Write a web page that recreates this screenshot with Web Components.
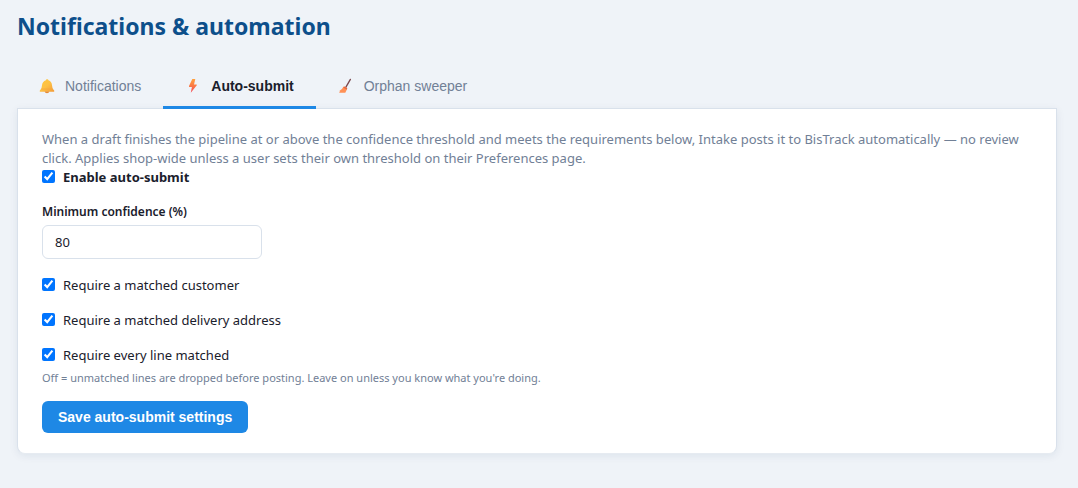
<!DOCTYPE html>
<html lang="en">
<head>
<meta charset="utf-8">
<title>Notifications &amp; automation</title>
<style>
  :root {
    --page: #eff3f8; --ink: #1a202c; --muted: #718096; --line: #d9e1eb;
    --brand: #0d4f8b; --accent: #1e88e5;
    --text-font: "Noto Sans", "Open Sans", sans-serif;
    --ui-font: "Liberation Sans", Arial, sans-serif;
  }
  body { margin: 0; background: var(--page); color: var(--ink); font: 13px/19px var(--text-font); }
</style>
</head>
<body>
<settings-page></settings-page>

<template id="settings-page">
  <style>
    :host { display: block; padding: 8px 21px 32px 17px; }
    h1 { margin: 0 0 28px; font-size: 23px; line-height: 36px; font-weight: 700; color: var(--brand); }
    nav { display: flex; }
    p { margin: 0; color: var(--muted); }
    small { display: block; font-size: 11px; line-height: 16px; color: var(--muted); }
    .checks { display: grid; gap: 16px; margin: 17px 0 5px; }
  </style>
  <h1>Notifications &amp; automation</h1>
  <nav role="tablist" aria-label="Settings sections">
    <settings-tab>
      <svg slot="icon" width="20" height="20" viewBox="0 0 20 20">
        <defs><linearGradient id="bell" x1="0" x2="1" y1="0" y2="1"><stop offset="0" stop-color="#ffc83d"/><stop offset=".5" stop-color="#fdc044"/><stop offset="1" stop-color="#f29a38"/></linearGradient></defs>
        <path d="M8.900 4.200C8.900 2.800 11.400 2.800 11.400 4.200 13.900 5 14.800 6.800 15 9.300l.6 3.300 1.600 1.900v1.300H2.800v-1.300L4.400 12.600 5 9.300C5.300 6.800 6.400 5 8.900 4.200Z" fill="url(#bell)"/>
        <path d="M7.800 15.500h4.400c0 2.200-4.400 2.200-4.400 0Z" fill="#e58a35"/><path d="M4.300 13 15.800 13" stroke="#f6a63d" stroke-width=".8"/>
      </svg>Notifications
    </settings-tab>
    <settings-tab selected>
      <svg slot="icon" width="20" height="20" viewBox="0 0 20 20">
        <defs><linearGradient id="bolt" x1="0" x2="0" y1="0" y2="1"><stop offset="0" stop-color="#ffa13d"/><stop offset=".5" stop-color="#fa7845"/><stop offset="1" stop-color="#f4475a"/></linearGradient></defs>
        <path d="M9.300 3 6 10q-.3.900.5.900H8.900L7.800 16.800 13.800 9.300q.4-.9-.5-.9H11L12.300 3Z" fill="url(#bolt)"/>
      </svg>Auto-submit
    </settings-tab>
    <settings-tab>
      <svg slot="icon" width="20" height="20" viewBox="0 0 20 20">
        <path d="M14.300 3.500 9.700 11.500" stroke="#7b4a50" stroke-width="1.500" stroke-linecap="round"/>
        <path d="M7.600 10.400q3 .2 3.500 2.700L9.300 16.700H3l1.200-1.400H3q3-1.500 4.600-4.900Z" fill="#ff9156"/>
        <path d="m8.200 10.400 3.100 1.900-.5 1.200L7.400 11.700Z" fill="#e9663f"/>
      </svg>Orphan sweeper
    </settings-tab>
  </nav>
  <settings-card>
    <p>When a draft finishes the pipeline at or above the confidence threshold and meets the requirements below, Intake posts it to BisTrack automatically — no review click. Applies shop-wide unless a user sets their own threshold on their Preferences page.</p>
    <check-option strong>Enable auto-submit</check-option>
    <number-field value="80">Minimum confidence (%)</number-field>
    <div class="checks">
      <check-option>Require a matched customer</check-option>
      <check-option>Require a matched delivery address</check-option>
      <check-option>Require every line matched</check-option>
    </div>
    <small>Off = unmatched lines are dropped before posting. Leave on unless you know what you're doing.</small>
    <action-button>Save auto-submit settings</action-button>
  </settings-card>
</template>

<template id="settings-tab">
  <style>
    :host { display: block; position: relative; }
    button { display: flex; align-items: center; gap: 8px; height: 37px; padding: 0 22px 6px 20px; border: 0; border-bottom: 3px solid transparent; box-sizing: border-box; background: none; color: var(--muted); font: 14px/20px var(--ui-font); white-space: nowrap; }
    :host([selected]) button { border-color: var(--accent); color: var(--ink); font-weight: 700; }
  </style>
  <button type="button" role="tab"><slot name="icon"></slot><span><slot></slot></span></button>
</template>

<template id="settings-card">
  <style>
    :host { display: block; margin-top: -1px; padding: 21px 24px 20px; background: #fff; border: 1px solid var(--line); border-bottom-color: #e6ebf1; border-radius: 0 0 8px 8px; box-shadow: 0 2px 8px rgba(15, 50, 90, .08); }
  </style>
  <slot></slot>
</template>

<template id="check-option">
  <style>
    :host { display: block; }
    label { display: flex; align-items: center; gap: 8px; }
    input { width: 13px; height: 13px; margin: 0 0 2px; accent-color: #0075ff; }
    :host([strong]) { font-weight: 700; }
  </style>
  <label><input type="checkbox" checked><span><slot></slot></span></label>
</template>

<template id="number-field">
  <style>
    :host { display: block; margin-top: 15px; }
    label { display: block; margin-bottom: 4px; font-size: 12px; font-weight: 600; }
    input { display: block; box-sizing: border-box; width: 220px; max-width: 100%; height: 34px; padding: 0 12px; border: 1px solid var(--line); border-radius: 6px; background: #fff; color: var(--ink); font: 13px/19px var(--text-font); }
  </style>
  <label for="value"><slot></slot></label>
  <input id="value" type="text" inputmode="numeric">
</template>

<template id="action-button">
  <style>
    :host { display: block; margin-top: 15px; }
    button { display: block; height: 32px; padding: 0 16px; border: 0; border-radius: 6px; background: var(--accent); color: #fff; font: 700 14px/20px var(--ui-font); }
  </style>
  <button type="button"><slot></slot></button>
</template>

<script>
  class TemplateElement extends HTMLElement {
    constructor() {
      super();
      const template = document.getElementById(this.localName);
      this.attachShadow({ mode: "open" }).append(template.content.cloneNode(true));
    }
  }
  class SettingsTab extends TemplateElement {
    connectedCallback() {
      this.shadowRoot.querySelector("button").setAttribute("aria-selected", this.hasAttribute("selected"));
    }
  }
  class NumberField extends TemplateElement {
    connectedCallback() {
      this.shadowRoot.querySelector("input").value = this.getAttribute("value");
    }
  }
  customElements.define("settings-tab", SettingsTab);
  customElements.define("number-field", NumberField);
  for (const name of ["settings-card", "check-option", "action-button", "settings-page"]) {
    customElements.define(name, class extends TemplateElement {});
  }
</script>
</body>
</html>
